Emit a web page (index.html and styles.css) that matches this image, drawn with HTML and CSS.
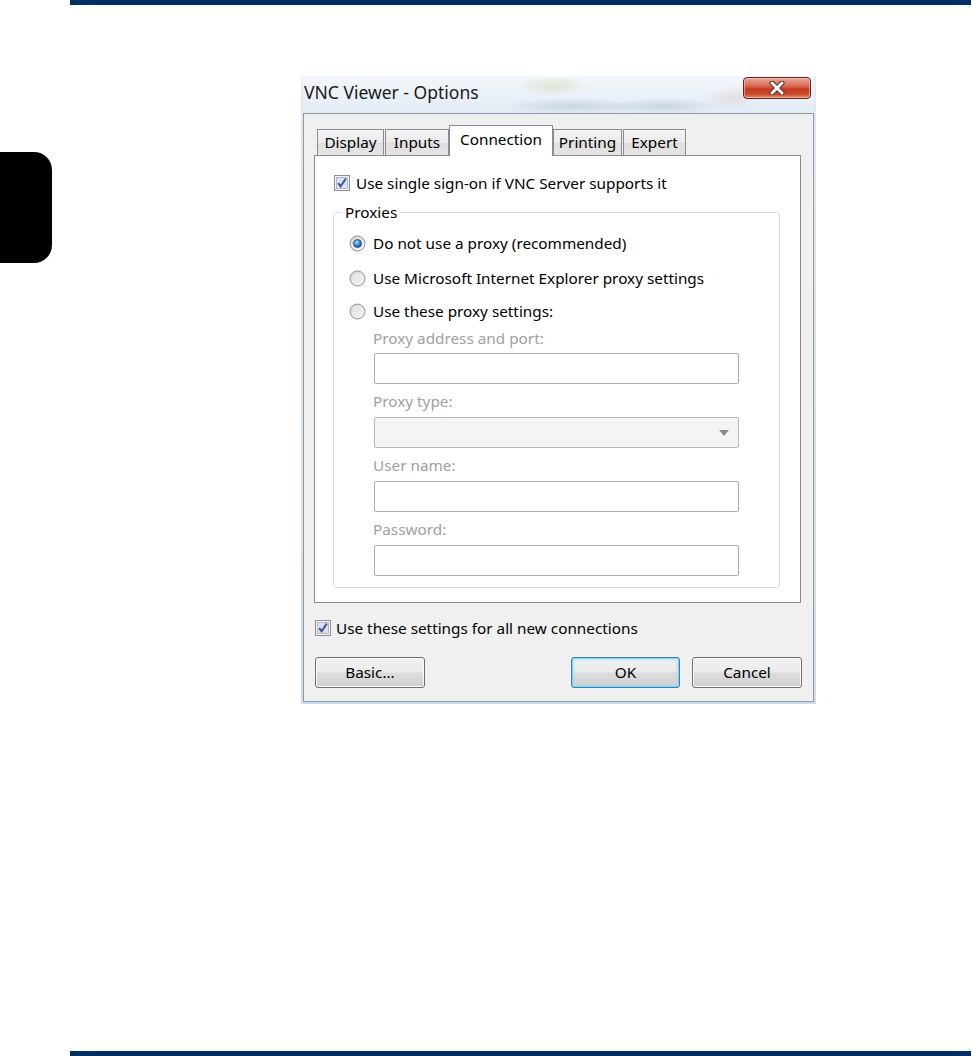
FILE: index.html
```html
<!DOCTYPE html>
<html lang="en">
<head>
<meta charset="utf-8">
<title>VNC Viewer - Options</title>
<link rel="stylesheet" href="styles.css">
</head>
<body>
<div class="page">
  <div class="rule"></div>
  <div class="main">
    <div class="thumb-tab"></div>
    <div class="dialog">
      <div class="titlebar">
        <div class="title">VNC Viewer - Options</div>
        <div class="close-btn">
          <svg width="22" height="14" viewBox="0 0 22 14">
            <path d="M6 2 L16 12 M16 2 L6 12" stroke="#5b2a22" stroke-width="5" stroke-linecap="round"/>
            <path d="M6 2 L16 12 M16 2 L6 12" stroke="#ffffff" stroke-width="3" stroke-linecap="round"/>
          </svg>
        </div>
      </div>
      <div class="body">
        <div class="tabs">
          <div class="tab w-display">Display</div>
          <div class="tab w-inputs">Inputs</div>
          <div class="tab tab-active w-conn">Connection</div>
          <div class="tab w-print">Printing</div>
          <div class="tab w-expert">Expert</div>
        </div>
        <div class="panel">
          <div class="check-row">
            <svg class="cb" width="16" height="16" viewBox="0 0 16 16">
              <rect x="0.5" y="0.5" width="15" height="15" fill="#f6f6f6" stroke="#8e8f8f"/>
              <rect x="2.5" y="2.5" width="11" height="11" fill="#dfe2f0" stroke="#b3b6c6"/>
              <path d="M4.2 8.2 L6.6 11.2 L11.8 3.6" fill="none" stroke="#3a55a8" stroke-width="2"/>
            </svg>
            <span>Use single sign-on if VNC Server supports it</span>
          </div>
          <fieldset class="group">
            <legend>Proxies</legend>
            <div class="radio-row r1">
              <svg class="rb" width="17" height="17" viewBox="0 0 17 17">
                <defs>
                  <radialGradient id="dot" cx="0.4" cy="0.35" r="0.7">
                    <stop offset="0" stop-color="#a8def9"/>
                    <stop offset="0.5" stop-color="#3a8fd0"/>
                    <stop offset="1" stop-color="#174f8c"/>
                  </radialGradient>
                  <linearGradient id="ring" x1="0" y1="0" x2="1" y2="1">
                    <stop offset="0" stop-color="#d4d4d4"/>
                    <stop offset="1" stop-color="#fafafa"/>
                  </linearGradient>
                </defs>
                <circle cx="8.5" cy="8.5" r="7.5" fill="url(#ring)" stroke="#8e8f8f"/>
                <circle cx="8.5" cy="8.5" r="4" fill="url(#dot)" stroke="#1f4f86" stroke-width="0.8"/>
              </svg>
              <span>Do not use a proxy (recommended)</span>
            </div>
            <div class="radio-row r2">
              <svg class="rb" width="17" height="17" viewBox="0 0 17 17">
                <circle cx="8.5" cy="8.5" r="7.5" fill="url(#ring)" stroke="#8e8f8f"/>
                <circle cx="8.5" cy="8.5" r="5" fill="#e9e9e9" opacity="0.7"/>
              </svg>
              <span>Use Microsoft Internet Explorer proxy settings</span>
            </div>
            <div class="radio-row r3">
              <svg class="rb" width="17" height="17" viewBox="0 0 17 17">
                <circle cx="8.5" cy="8.5" r="7.5" fill="url(#ring)" stroke="#8e8f8f"/>
                <circle cx="8.5" cy="8.5" r="5" fill="#e9e9e9" opacity="0.7"/>
              </svg>
              <span>Use these proxy settings:</span>
            </div>
            <div class="fields">
              <div class="flabel">Proxy address and port:</div>
              <div class="textbox"></div>
              <div class="flabel">Proxy type:</div>
              <div class="combo">
                <svg width="10" height="6" viewBox="0 0 10 6"><path d="M0 0 H10 L5 6 Z" fill="#8a8a8a"/></svg>
              </div>
              <div class="flabel">User name:</div>
              <div class="textbox"></div>
              <div class="flabel">Password:</div>
              <div class="textbox"></div>
            </div>
          </fieldset>
        </div>
        <div class="check-row bottom-check">
          <svg class="cb" width="16" height="16" viewBox="0 0 16 16">
            <rect x="0.5" y="0.5" width="15" height="15" fill="#f6f6f6" stroke="#8e8f8f"/>
            <rect x="2.5" y="2.5" width="11" height="11" fill="#dfe2f0" stroke="#b3b6c6"/>
            <path d="M4.2 8.2 L6.6 11.2 L11.8 3.6" fill="none" stroke="#3a55a8" stroke-width="2"/>
          </svg>
          <span>Use these settings for all new connections</span>
        </div>
        <div class="buttons">
          <div class="btn btn-basic">Basic...</div>
          <div class="spacer"></div>
          <div class="btn btn-default">OK</div>
          <div class="btn btn-cancel">Cancel</div>
        </div>
      </div>
    </div>
  </div>
  <div class="rule rule-bottom"></div>
</div>
</body>
</html>
```

FILE: styles.css
```css
* { box-sizing: border-box; }

html, body {
  margin: 0;
  padding: 0;
  background: #ffffff;
}

.page {
  width: 973px;
  height: 1056px;
  display: flex;
  flex-direction: column;
  font-family: "Noto Sans", "Open Sans", sans-serif;
  font-size: 15.3px;
  color: #000;
}

.rule {
  margin-left: 70px;
  width: 901px;
  height: 5px;
  background: #002f66;
  flex: none;
}

.rule-bottom {
  margin-top: auto;
}

.main {
  display: flex;
  align-items: flex-start;
}

.thumb-tab {
  width: 52px;
  height: 111px;
  margin-top: 147px;
  background: #000;
  border-radius: 0 18px 18px 0;
  flex: none;
}

.dialog {
  margin-left: 249px;
  margin-top: 71px;
  width: 515px;
  height: 628px;
  padding: 0 2px 2px 2px;
  background: linear-gradient(180deg, #e9eff6 0%, #dde7f2 6%, #cfdceb 100%);
  display: flex;
  flex-direction: column;
  flex: none;
}

.titlebar {
  height: 37px;
  display: flex;
  justify-content: space-between;
  align-items: flex-start;
  background:
    radial-gradient(ellipse 40px 10px at 250px 10px, rgba(200,210,170,0.45), transparent),
    radial-gradient(ellipse 70px 8px at 270px 30px, rgba(150,165,190,0.35), transparent),
    radial-gradient(ellipse 60px 8px at 360px 30px, rgba(150,165,190,0.35), transparent),
    radial-gradient(ellipse 30px 12px at 430px 22px, rgba(220,190,180,0.35), transparent),
    linear-gradient(180deg, #f4f7fb, #e2ebf5);
  flex: none;
}

.title {
  margin-top: 5px;
  margin-left: 1px;
  line-height: 22px;
  font-size: 17.5px;
  color: #1a1a1a;
}

.close-btn {
  width: 68px;
  height: 22px;
  margin-right: 3px;
  margin-top: 1px;
  border: 1px solid #5d2520;
  border-radius: 4px;
  background: linear-gradient(180deg, #e9a796 0%, #d96a55 40%, #c43a20 55%, #c8492c 80%, #e58c6b 100%);
  box-shadow: inset 0 0 0 1px rgba(255,220,210,0.5);
  display: flex;
  align-items: center;
  justify-content: center;
}

.body {
  flex: 1;
  background: #f0f0f0;
  border: 1px solid #8d99a8;
  padding: 11px 12px 0 10px;
}

.tabs {
  height: 30px;
  display: flex;
  align-items: flex-end;
  padding-left: 3px;
}

.tab {
  height: 26px;
  border: 1px solid #898c95;
  border-bottom: none;
  background: linear-gradient(180deg, #f3f3f3 0%, #ebebeb 50%, #dedede 52%, #e5e5e5 100%);
  line-height: 24px;
  text-align: center;
  flex: none;
}

.tab-active {
  height: 31px;
  margin-bottom: -1px;
  background: #ffffff;
  position: relative;
  z-index: 1;
  line-height: 26px;
}

.w-display { width: 67px; }
.w-inputs { width: 64px; margin-left: 1px; }
.w-conn { width: 104px; }
.w-print { width: 69px; }
.w-expert { width: 63px; margin-left: 1px; }

.panel {
  height: 448px;
  border: 1px solid #898c95;
  background: #ffffff;
  padding: 17px 20px 0 18px;
}

.check-row {
  display: flex;
  align-items: center;
  height: 20px;
  line-height: 20px;
}

.check-row .cb {
  margin-left: 1px;
  margin-right: 6px;
  flex: none;
}

.group {
  margin: 9px 0 0 0;
  border: 1px solid #d5dfe5;
  border-radius: 3px;
  padding: 11px 0 11px 15px;
  min-width: 0;
}

.group legend {
  padding: 0 3px;
  margin-left: -7px;
  line-height: 20px;
}

.radio-row {
  display: flex;
  align-items: center;
  height: 20px;
  line-height: 20px;
}

.radio-row .rb {
  margin-right: 7px;
  flex: none;
}

.r2 { margin-top: 15px; }
.r3 { margin-top: 13px; }

.fields {
  padding-left: 24px;
}

.flabel {
  margin-top: 7px;
  line-height: 20px;
  color: #a0a0a0;
}

.textbox,
.combo {
  margin-top: 6px;
  margin-left: 1px;
  width: 365px;
  height: 31px;
  border: 1px solid #abadb3;
  border-radius: 2px;
  background: #ffffff;
}

.fields .flabel:first-child + .textbox {
  margin-top: 5px;
}

.combo {
  background: #f4f4f4;
  border-color: #b5b8bc;
  display: flex;
  align-items: center;
  justify-content: flex-end;
  padding-right: 9px;
}

.bottom-check {
  margin-top: 15px;
}

.bottom-check .cb {
  margin-right: 5px;
}

.buttons {
  margin-top: 19px;
  display: flex;
  height: 31px;
}

.spacer { flex: 1; }

.btn {
  height: 31px;
  border: 1px solid #707070;
  border-radius: 3px;
  background: linear-gradient(180deg, #f2f2f2 0%, #ebebeb 48%, #dddddd 52%, #cfcfcf 100%);
  box-shadow: inset 0 0 0 1px #fbfbfb;
  text-align: center;
  line-height: 29px;
}

.btn-basic { width: 110px; margin-left: 1px; }
.btn-default {
  width: 109px;
  border-color: #3c7fb1;
  box-shadow: inset 0 0 0 1px #7fd3f5, inset 0 0 3px 2px rgba(140,220,250,0.55);
}
.btn-cancel { width: 110px; margin-left: 12px; margin-right: -1px; }
```
